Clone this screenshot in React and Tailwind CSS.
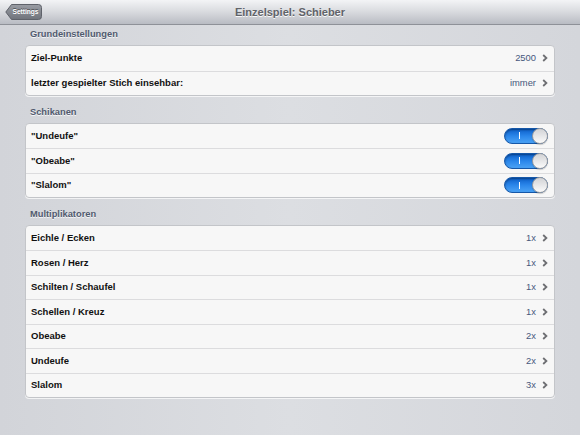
const GRUND = [
  { label: 'Ziel-Punkte', value: '2500' },
  { label: 'letzter gespielter Stich einsehbar:', value: 'immer' },
];

const SCHIKANEN = ['"Undeufe"', '"Obeabe"', '"Slalom"'];

const MULTI = [
  { label: 'Eichle / Ecken', value: '1x' },
  { label: 'Rosen / Herz', value: '1x' },
  { label: 'Schilten / Schaufel', value: '1x' },
  { label: 'Schellen / Kreuz', value: '1x' },
  { label: 'Obeabe', value: '2x' },
  { label: 'Undeufe', value: '2x' },
  { label: 'Slalom', value: '3x' },
];

function Chevron() {
  return (
    <svg width="6" height="8" viewBox="0 0 6 8" className="shrink-0">
      <polyline points="1.2,1 4.4,4 1.2,7" fill="none" stroke="#6e6f73" strokeWidth="1.8" />
    </svg>
  );
}

function Toggle() {
  return (
    <div className="flex h-[16px] w-[44px] items-center rounded-full border border-[#1557a8] bg-gradient-to-b from-[#0b5fc9] via-[#2a86ea] to-[#4aa2f5] shadow-[inset_0_1px_2px_rgba(0,0,0,0.35)]">
      <div className="flex flex-1 justify-center pl-[2px]">
        <span className="h-[7px] w-[1.5px] bg-white" />
      </div>
      <div className="-mr-px h-[16px] w-[16px] rounded-full border border-[#9a9ca0] bg-gradient-to-b from-[#d2d3d6] to-[#fbfbfb] shadow-[0_1px_1px_rgba(0,0,0,0.2)]" />
    </div>
  );
}

function Row({ first, children }) {
  return (
    <div className={`flex h-[24.5px] items-center pl-[5px] pr-[6px] ${first ? '' : 'border-t border-[#dcdcde]'}`}>
      {children}
    </div>
  );
}

function Label({ children }) {
  return <span className="flex-1 text-[9.5px] font-bold text-[#111]">{children}</span>;
}

function Section({ title, className = '', children }) {
  return (
    <div className={className}>
      <div className="flex h-[20px] items-end pb-[5px] pl-[5px] text-[9.3px] font-bold leading-[11px] text-[#505a6e] [text-shadow:0_1px_0_rgba(255,255,255,0.8)]">
        {title}
      </div>
      <div className="overflow-hidden rounded-[4px] border border-[#c3c5c9] bg-[#f7f7f7] shadow-[0_1px_0_rgba(255,255,255,0.7)]">
        {children}
      </div>
    </div>
  );
}

export default function App() {
  return (
    <div className="flex h-[435px] w-[580px] flex-col bg-gradient-to-r from-[#d2d4d9] via-[#dcdee2] to-[#d4d6db] font-['Liberation_Sans',Arial,sans-serif]">
      {/* Navigation */}
      <div className="relative flex h-[25px] shrink-0 items-center justify-center border-b border-[#8e9198] bg-gradient-to-b from-[#f3f4f6] via-[#d8dade] to-[#b9bcc3]">
        <div className="absolute left-[5px] top-[4px] flex h-[16px] w-[37px] items-center justify-center">
          <svg width="37" height="16" viewBox="0 0 37 16" className="absolute inset-0">
            <defs>
              <linearGradient id="bb" x1="0" y1="0" x2="0" y2="1">
                <stop offset="0" stopColor="#9a9da4" />
                <stop offset="1" stopColor="#6f737b" />
              </linearGradient>
            </defs>
            <path d="M6.5 0.5 H33.5 A3 3 0 0 1 36.5 3.5 V12.5 A3 3 0 0 1 33.5 15.5 H6.5 L0.8 8 Z" fill="url(#bb)" stroke="#5f626a" strokeWidth="1" />
          </svg>
          <span className="relative pl-[4px] text-[6.6px] font-bold text-white [text-shadow:0_-1px_0_rgba(0,0,0,0.45)]">Settings</span>
        </div>
        <span className="text-[11px] font-bold text-[#616369] [text-shadow:0_1px_0_rgba(255,255,255,0.9)]">Einzelspiel: Schieber</span>
      </div>

      <div className="mx-[25px] flex flex-col">
        <Section title="Grundeinstellungen">
          {GRUND.map((r, i) => (
            <Row key={r.label} first={i === 0}>
              <Label>{r.label}</Label>
              <span className="mr-[6px] text-[9.4px] text-[#47587c]">{r.value}</span>
              <Chevron />
            </Row>
          ))}
        </Section>

        <Section title="Schikanen" className="mt-[6.5px]">
          {SCHIKANEN.map((l, i) => (
            <Row key={l} first={i === 0}>
              <Label>{l}</Label>
              <Toggle />
            </Row>
          ))}
        </Section>

        <Section title="Multiplikatoren" className="mt-[6.5px]">
          {MULTI.map((r, i) => (
            <Row key={r.label} first={i === 0}>
              <Label>{r.label}</Label>
              <span className="mr-[6px] text-[9.4px] text-[#47587c]">{r.value}</span>
              <Chevron />
            </Row>
          ))}
        </Section>
      </div>
    </div>
  );
}
